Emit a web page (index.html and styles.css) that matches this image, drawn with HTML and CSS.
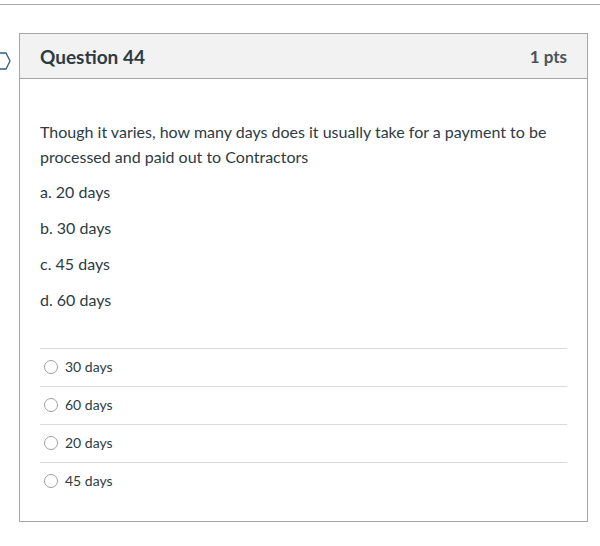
FILE: index.html
```html
<!DOCTYPE html>
<html>
<head>
<meta charset="utf-8">
<link rel="stylesheet" href="styles.css">
</head>
<body>
<div class="topline"></div>
<div class="wrap">
  <svg class="marker" width="12" height="18" viewBox="0 0 12 18"><path d="M-6 1 H6 L10 9 L6 17 H-6" fill="#fff" stroke="#2d5f85" stroke-width="1.3"/></svg>
  <div class="card">
    <div class="header">
      <span class="title">Question 44</span>
      <span class="pts">1 pts</span>
    </div>
    <div class="body">
      <p class="q">Though it varies, how many days does it usually take for a payment to be processed and paid out to Contractors</p>
      <p class="opt">a. 20 days</p>
      <p class="opt">b. 30 days</p>
      <p class="opt">c. 45 days</p>
      <p class="opt">d. 60 days</p>
      <div class="answers">
        <label class="ans"><span class="radio"></span>30 days</label>
        <label class="ans"><span class="radio"></span>60 days</label>
        <label class="ans"><span class="radio"></span>20 days</label>
        <label class="ans"><span class="radio"></span>45 days</label>
      </div>
    </div>
  </div>
</div>
</body>
</html>
```
FILE: styles.css
```css
* { box-sizing: border-box; }
html, body { margin: 0; padding: 0; background: #fff; }
body { font-family: Lato, "Noto Sans", sans-serif; color: #2d3b45; }
.topline { margin-top: 4px; border-top: 1px solid #a9a9a9; }
.wrap { position: relative; padding: 28px 0 0 19px; }
.marker { position: absolute; left: 0; top: 47px; }
.card { width: 569px; border: 1px solid #a5a5a5; }
.header { height: 45px; background: #f2f2f2; border-bottom: 1px solid #a5a5a5; display: flex; align-items: center; justify-content: space-between; padding: 0 20px; }
.title { font-size: 19px; font-weight: 700; }
.pts { font-size: 17px; font-weight: 700; color: #4b5357; }
.body { padding: 40px 20px 21px; }
.q { margin: 0 0 11px; font-size: 16px; line-height: 25px; }
.opt { margin: 0 0 12px; font-size: 16px; line-height: 24px; }
.answers { margin-top: 36px; }
.ans { display: flex; align-items: center; height: 38px; border-top: 1px solid #d9d9d9; font-size: 14px; padding-left: 4px; padding-bottom: 2px; }
.radio { width: 14px; height: 14px; border: 1px solid #a0a0a0; border-radius: 50%; margin-right: 7px; background: #fff; }
```
